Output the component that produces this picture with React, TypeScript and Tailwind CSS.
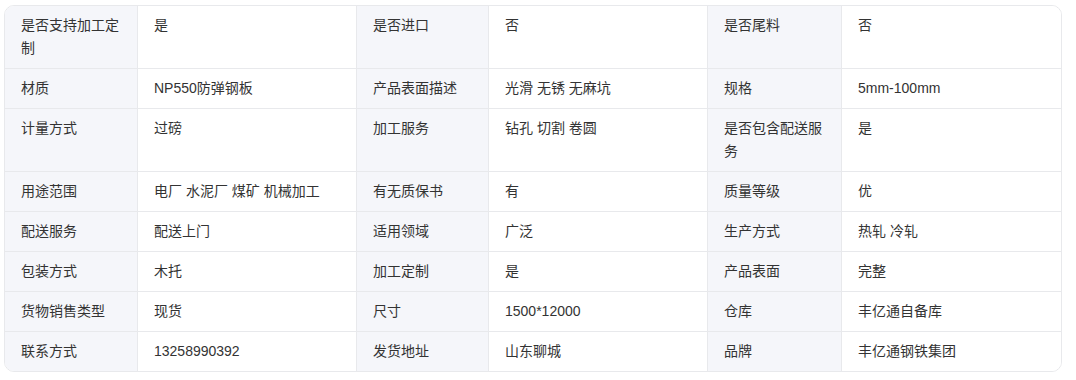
import React from "react";

type Pair = [string, string];

const rows: Pair[][] = [
  [["是否支持加工定制", "是"], ["是否进口", "否"], ["是否尾料", "否"]],
  [["材质", "NP550防弹钢板"], ["产品表面描述", "光滑 无锈 无麻坑"], ["规格", "5mm-100mm"]],
  [["计量方式", "过磅"], ["加工服务", "钻孔 切割 卷圆"], ["是否包含配送服务", "是"]],
  [["用途范围", "电厂 水泥厂 煤矿 机械加工"], ["有无质保书", "有"], ["质量等级", "优"]],
  [["配送服务", "配送上门"], ["适用领域", "广泛"], ["生产方式", "热轧 冷轧"]],
  [["包装方式", "木托"], ["加工定制", "是"], ["产品表面", "完整"]],
  [["货物销售类型", "现货"], ["尺寸", "1500*12000"], ["仓库", "丰亿通自备库"]],
  [["联系方式", "13258990392"], ["发货地址", "山东聊城"], ["品牌", "丰亿通钢铁集团"]],
];

const App = () => {
  return (
    <div className="min-h-[380px] bg-white pt-[5px] pl-[4px]">
      <div
        className="w-[1058px] overflow-hidden rounded-[10px] border border-[#e8e9ec] text-[14px] leading-[23px] text-[#333333]"
        style={{ fontFamily: '"Liberation Sans", "Noto Sans CJK SC", sans-serif' }}
      >
        <div className="grid grid-cols-[133px_219px_132px_219px_134px_1fr]">
          {rows.map((row, ri) =>
            row.map(([label, value], ci) => {
              const last = ri === rows.length - 1;
              return (
                <React.Fragment key={`${ri}-${ci}`}>
                  <div
                    className={`bg-[#f5f6fa] border-r border-[#e8e9ec] px-4 py-[8px] ${
                      last ? "" : "border-b"
                    }`}
                  >
                    {label}
                  </div>
                  <div
                    className={`bg-white border-[#e8e9ec] px-4 py-[8px] ${
                      ci < 2 ? "border-r" : ""
                    } ${last ? "" : "border-b"}`}
                  >
                    {value}
                  </div>
                </React.Fragment>
              );
            })
          )}
        </div>
      </div>
    </div>
  );
};

export default App;
